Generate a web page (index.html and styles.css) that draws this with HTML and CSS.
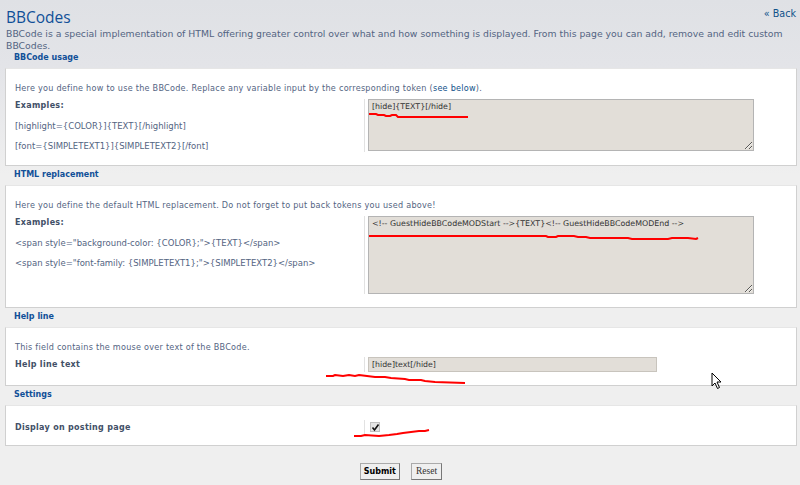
FILE: index.html
```html
<!DOCTYPE html>
<html>
    <head>
        <meta charset="utf-8">
        <link rel="stylesheet" href="styles.css">
    </head>
<body>
    <div class="page">
        <div class="top">
            <a class="back" href="#">&laquo; Back</a>
            <h1>BBCodes</h1>
            <p class="intro">BBCode is a special implementation of HTML offering greater control over what and how something is displayed. From this page you can add, remove and edit custom BBCodes.</p>
        </div>

        <form class="bbform">
            <h3 class="legend">BBCode usage</h3>
            <div class="panel">
                <p class="explain">Here you define how to use the BBCode. Replace any variable input by the corresponding token (<a href="#">see below</a>).</p>
                <div class="row">
                    <div class="label">
                        <p class="examples">Examples:</p>
                        <p class="sample">[highlight={COLOR}]{TEXT}[/highlight]</p>
                        <p class="sample">[font={SIMPLETEXT1}]{SIMPLETEXT2}[/font]</p>
                    </div>
                    <div class="field">
                        <textarea class="box box-small" readonly>[hide]{TEXT}[/hide]</textarea>
                        <svg class="scribble s1" width="110" height="8" viewBox="0 0 110 8">
                            <polyline points="1,2 8,2 10,3 16,3 18,4 22,4 24,3 28,3 30,5 100,5" />
                        </svg>
                    </div>
                </div>
            </div>

            <h3 class="legend">HTML replacement</h3>
            <div class="panel">
                <p class="explain">Here you define the default HTML replacement. Do not forget to put back tokens you used above!</p>
                <div class="row">
                    <div class="label">
                        <p class="examples">Examples:</p>
                        <p class="sample">&lt;span style="background-color: {COLOR};"&gt;{TEXT}&lt;/span&gt;</p>
                        <p class="sample">&lt;span style="font-family: {SIMPLETEXT1};"&gt;{SIMPLETEXT2}&lt;/span&gt;</p>
                    </div>
                    <div class="field">
                        <textarea class="box box-big" readonly>&lt;!-- GuestHideBBCodeMODStart --&gt;{TEXT}&lt;!-- GuestHideBBCodeMODEnd --&gt;</textarea>
                        <svg class="scribble s2" width="340" height="10" viewBox="0 0 340 10">
                            <polyline points="1,2 178,2 180,3 188,3 190,2 206,2 210,3 218,3 222,4 260,4 264,5 300,5 304,4 320,4 328,5 330,4" />
                        </svg>
                    </div>
                </div>
            </div>

            <h3 class="legend">Help line</h3>
            <div class="panel">
                <p class="explain">This field contains the mouse over text of the BBCode.</p>
                <div class="row row-line">
                    <div class="label">
                        <p class="examples">Help line text</p>
                    </div>
                    <div class="field">
                        <input class="text" type="text" value="[hide]text[/hide]" readonly>
                        <svg class="scribble s3" width="150" height="12" viewBox="0 0 150 12">
                            <polyline points="1,2 8,2 10,1 18,2 24,1 30,2 34,1 42,2 50,3 60,3 66,4 80,5 84,6 96,6 100,7 110,8 140,9" />
                        </svg>
                    </div>
                </div>
                <svg class="cursor" width="12" height="18" viewBox="0 0 12 18">
                    <path d="M1,1 L1,14 L4,11 L6.5,16.5 L8.5,15.5 L6,10 L10,10 Z" />
                </svg>
            </div>

            <h3 class="legend">Settings</h3>
            <div class="panel panel-last">
                <div class="row row-line">
                    <div class="label">
                        <p class="examples">Display on posting page</p>
                    </div>
                    <div class="field">
                        <span class="check">
                            <svg width="9" height="9" viewBox="0 0 9 9"><polyline points="1.5,4.5 3.5,7 7.5,1.5" /></svg>
                        </span>
                        <svg class="scribble s4" width="80" height="10" viewBox="0 0 80 10">
                            <polyline points="1,8 8,8 12,7 26,8 36,7 44,6 50,5 58,4 66,3 72,3 76,2" />
                        </svg>
                    </div>
                </div>
            </div>

            <div class="buttons">
                <button type="button" class="btn btn-main">Submit</button>
                <button type="button" class="btn btn-reset">Reset</button>
            </div>
        </form>
    </div>
</body>
</html>
```

FILE: styles.css
```css
* {
    padding: 0;
    margin: 0;
    box-sizing: border-box;
}
html, body {
    height: 100%;
}
body {
    font-family: "DejaVu Sans", Verdana, sans-serif;
    color: #536482;
    background: linear-gradient(#dfe1e5 0, #e3e4e8 65px, #efefef 175px, #efefef 100%);
}
a {
    color: #105289;
    text-decoration: none;
}
.page {
    padding: 0 3px 0 5px;
}
.top {
    padding-top: 6px;
}
.back {
    float: right;
    font-size: 9.6px;
    line-height: 12px;
    margin-top: 2px;
    margin-right: 1px;
}
h1 {
    font-family: "Open Sans", "DejaVu Sans", sans-serif;
    font-size: 15.5px;
    font-weight: normal;
    color: #115098;
    line-height: 22px;
    padding-left: 1px;
}
.intro {
    font-size: 9.3px;
    line-height: 12px;
    padding-left: 1px;
}
.legend {
    font-size: 8px;
    line-height: 12px;
    color: #115098;
    padding: 3px 0 4px 9px;
}
.bbform .legend:first-child {
    padding-top: 0;
}
.panel {
    position: relative;
    background: #fff;
    border: 1px solid #d0d0d0;
    border-top-color: #e6e6e6;
    padding: 13px 9px 13px 9px;
}
.panel-last {
    padding-top: 14px;
    padding-bottom: 11px;
}
.explain {
    font-size: 8.1px;
    line-height: 12px;
    letter-spacing: 0.25px;
}
.row {
    display: flex;
    margin-top: 5px;
}
.row-line {
    margin-top: 4px;
}
.panel-last .row-line {
    margin-top: 0;
}
.label {
    width: 349px;
    flex: none;
}
.examples {
    font-size: 8px;
    line-height: 12px;
    font-weight: bold;
    color: #425067;
    letter-spacing: 0.3px;
    margin-top: 1px;
}
.row-line .examples {
    margin-top: 2px;
}
.sample {
    font-size: 8.5px;
    line-height: 12px;
    margin-top: 8px;
}
.field {
    position: relative;
    border-left: 1px solid #e2e2e2;
    padding-left: 3px;
}
.box {
    display: block;
    width: 386px;
    background: #e2ded8;
    border: 1px solid #b4b4b4;
    color: #333;
    font-family: "DejaVu Sans", Verdana, sans-serif;
    font-size: 7.9px;
    line-height: 12px;
    padding: 1px 3px;
    resize: both;
    outline: none;
}
.box-small {
    height: 52px;
}
.box-big {
    height: 78px;
}
.text {
    display: block;
    width: 289px;
    height: 15px;
    background: #e2ded8;
    border: 1px solid #c8c4bd;
    color: #333;
    font-family: "DejaVu Sans", Verdana, sans-serif;
    font-size: 7.8px;
    padding: 0 3px;
    outline: none;
}
.check {
    display: block;
    width: 10px;
    height: 10px;
    margin: 2px 0 0 2px;
    background: #e4e4e4;
    border: 1px solid #c0c0c0;
}
.check svg {
    display: block;
    fill: none;
    stroke: #111;
    stroke-width: 1.6px;
}
.scribble {
    position: absolute;
    fill: none;
    stroke: #f00;
    stroke-width: 2px;
}
.s1 {
    left: 3px;
    top: 13px;
}
.s2 {
    left: 3px;
    top: 18px;
}
.s3 {
    left: -40px;
    top: 17px;
}
.s4 {
    left: -12px;
    top: 8px;
}
.cursor {
    position: absolute;
    left: 705px;
    top: 44px;
    fill: #fff;
    stroke: #000;
    stroke-width: 1px;
}
.buttons {
    text-align: center;
    padding-top: 13px;
}
.btn {
    font-family: "DejaVu Sans", Verdana, sans-serif;
    font-size: 8px;
    color: #000;
    background: #efefef;
    border: 1px solid #aaa;
    border-right-color: #777;
    border-bottom-color: #777;
    height: 17px;
    padding: 0 3px;
    margin: 0 3px;
}
.btn-main {
    font-weight: bold;
}
.btn-reset {
    font-family: "Liberation Serif", serif;
    font-size: 9.5px;
    color: #333;
    padding: 0 4px;
}
```
